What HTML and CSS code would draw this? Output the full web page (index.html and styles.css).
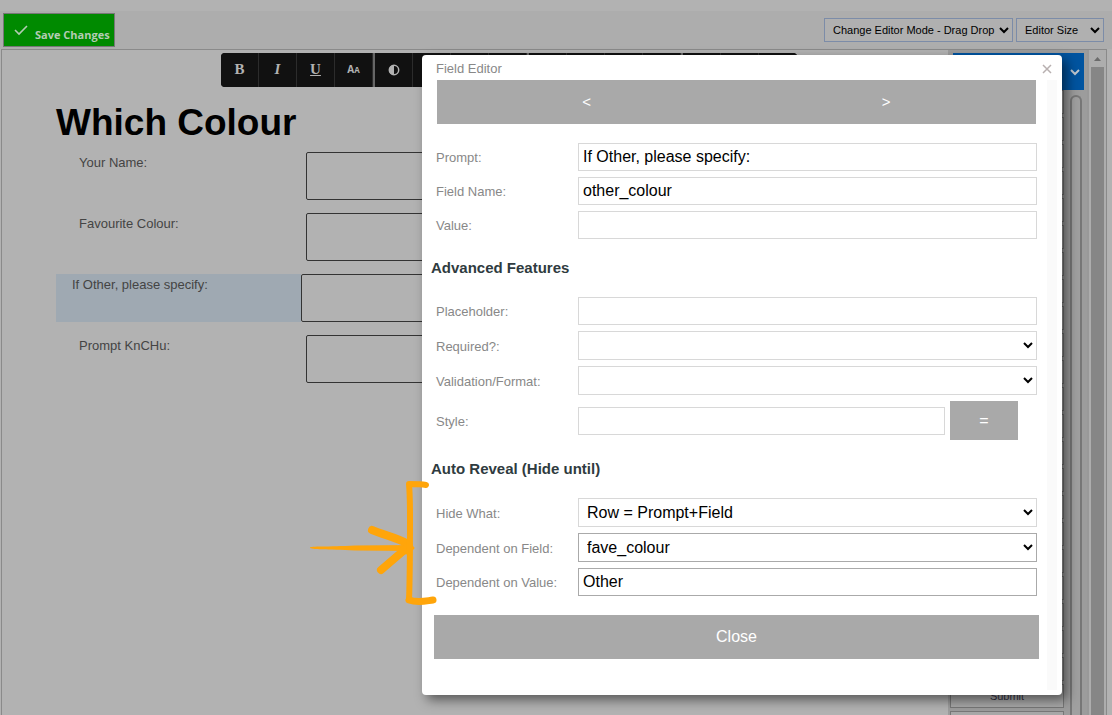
FILE: index.html
```html
<!DOCTYPE html>
<html lang="en">
<head>
  <meta charset="UTF-8">
  <title>Form Editor</title>
  <link rel="stylesheet" href="styles.css">
</head>
<body>
  <div class="top-bar">
    <button class="save-button">
      <svg width="14" height="12" viewBox="0 0 14 12"><path d="M1 6l4 4 8-8" fill="none" stroke="#b4ccb4" stroke-width="1.6"/></svg>
      <span>Save Changes</span>
    </button>
    <div class="top-options">
      <select class="mode-select" aria-label="Editor mode"><option>Change Editor Mode - Drag Drop</option></select>
      <select class="size-select" aria-label="Editor size"><option>Editor Size</option></select>
    </div>
  </div>

  <div class="editor">
    <div class="canvas">
      <div class="toolbar">
        <button class="tool">B</button>
        <button class="tool italic">I</button>
        <button class="tool underline">U</button>
        <button class="tool letters">A<small>A</small></button>
        <button class="tool group" aria-label="Contrast">
          <svg width="12" height="12" viewBox="0 0 12 12"><circle cx="6" cy="6" r="4.7" fill="none" stroke="#b2b2b2" stroke-width="1.5"/><path d="M6 1a5 5 0 0 0 0 10z" fill="#b2b2b2"/></svg>
        </button>
        <button class="tool"></button>
        <button class="tool"></button>
        <button class="tool"></button>
        <button class="tool group"></button>
        <button class="tool"></button>
        <button class="tool"></button>
        <button class="tool"></button>
        <button class="tool group"></button>
        <button class="tool"></button>
        <button class="tool"></button>
      </div>
      <h1>Which Colour</h1>
      <div class="form-row">
        <label for="your-name">Your Name:</label>
        <input type="text" id="your-name">
      </div>
      <div class="form-row">
        <label for="favourite">Favourite Colour:</label>
        <input type="text" id="favourite">
      </div>
      <div class="form-row selected">
        <label for="if-other">If Other, please specify:</label>
        <input type="text" id="if-other">
      </div>
      <div class="form-row">
        <label for="knchu">Prompt KnCHu:</label>
        <input type="text" id="knchu">
      </div>
    </div>

    <div class="palette">
      <button class="palette-head" aria-label="Choose palette">
        <svg width="10" height="7" viewBox="0 0 10 7"><path d="M1 1l4 4 4-4" fill="none" stroke="#c0c8d0" stroke-width="2"/></svg>
      </button>
      <div class="palette-body">
        <div class="palette-list">
          <button></button><button></button><button></button><button></button>
          <button></button><button></button><button></button><button></button>
          <button></button><button></button><button></button><button></button>
          <button></button><button></button><button></button><button></button>
          <button></button><button></button><button></button><button></button>
          <button></button><button></button>
          <button>Submit</button>
          <button></button>
        </div>
        <div class="palette-scroll"></div>
      </div>
    </div>
    <div class="scrollbar">
      <svg width="7" height="4" viewBox="0 0 7 4"><path d="M0 4l3.5-4L7 4z" fill="#6b6b6b"/></svg>
      <div class="thumb"></div>
    </div>
  </div>

  <div class="modal">
    <div class="modal-head">
      <span>Field Editor</span>
      <button class="modal-close" aria-label="Close editor">
        <svg width="10" height="10" viewBox="0 0 10 10"><path d="M1 1l8 8M9 1l-8 8" fill="none" stroke="#b8b0b0" stroke-width="1.5"/></svg>
      </button>
    </div>
    <div class="modal-body">
      <div class="modal-form">
        <div class="nav">
          <button>&lt;</button>
          <button>&gt;</button>
        </div>
        <div class="fields">
          <div class="field">
            <label for="prompt">Prompt:</label>
            <input type="text" id="prompt" value="If Other, please specify:">
          </div>
          <div class="field">
            <label for="field-name">Field Name:</label>
            <input type="text" id="field-name" value="other_colour">
          </div>
          <div class="field">
            <label for="value">Value:</label>
            <input type="text" id="value">
          </div>
        </div>
        <h2>Advanced Features</h2>
        <div class="fields">
          <div class="field">
            <label for="placeholder">Placeholder:</label>
            <input type="text" id="placeholder">
          </div>
          <div class="field">
            <label for="required">Required?:</label>
            <select id="required"><option></option></select>
          </div>
          <div class="field">
            <label for="validation">Validation/Format:</label>
            <select id="validation"><option></option></select>
          </div>
          <div class="field">
            <label for="style">Style:</label>
            <div class="style-box">
              <input type="text" id="style">
              <button>=</button>
            </div>
          </div>
        </div>
        <h2>Auto Reveal (Hide until)</h2>
        <div class="fields">
          <div class="field">
            <label for="hide-what">Hide What:</label>
            <select id="hide-what"><option>Row = Prompt+Field</option></select>
          </div>
          <div class="field">
            <label for="dep-field">Dependent on Field:</label>
            <select id="dep-field" class="changed"><option>fave_colour</option></select>
          </div>
          <div class="field">
            <label for="dep-value">Dependent on Value:</label>
            <input type="text" id="dep-value" class="changed" value="Other">
          </div>
        </div>
        <button class="close-button">Close</button>
      </div>
      <div class="modal-track"></div>
    </div>

    <svg class="pointer" width="130" height="126" viewBox="0 0 130 126" fill="none" stroke="#ffa50a" stroke-linecap="round" stroke-linejoin="round">
      <path d="M2 67.500C2 66 20 67 47 65.500L104 65v6L47 70.500C20 69 2 70 2 67.500z" fill="#ffa50a" stroke="none"/>
      <path d="M64 50c12 5 26 8 36 14" stroke-width="8"/>
      <path d="M73 90l28-24" stroke-width="8"/>
      <path d="M98 64l7 4-7 5z" stroke-width="3" fill="#ffa50a"/>
      <path d="M118 5c-5-1-12-1-17-1c1 11 1 22 1 34c0 24 0 58-1 82" stroke-width="6"/>
      <path d="M101 120c9 3 16 1 24 0" stroke-width="7"/>
    </svg>
  </div>
</body>
</html>
```
FILE: styles.css
```css
* {
  box-sizing: border-box;
}
body {
  margin: 0;
  height: 100vh;
  overflow: hidden;
  display: flex;
  flex-direction: column;
  background: #b2b2b2;
  font-family: "Liberation Sans", Arial, sans-serif;
  font-size: 13px;
}
button, input, select {
  font-family: inherit;
  margin: 0;
}
button {
  padding: 0;
  border: none;
}

/* top bar */
.top-bar {
  display: flex;
  justify-content: space-between;
  align-items: flex-start;
  margin-top: 11px;
  height: 38px;
  padding: 2px 8px 0 3px;
  background: #adadad;
}
.save-button {
  display: flex;
  align-items: center;
  gap: 7px;
  height: 34px;
  padding: 0 4px 0 10px;
  border: 1px solid #777;
  background: #008a00;
  color: #b4ccb4;
  font: bold 11px "Open Sans", sans-serif;
}
.save-button span {
  padding-top: 9px;
}
.top-options {
  display: flex;
  gap: 3px;
  padding-top: 5px;
}
.top-options select {
  height: 24px;
  padding: 0 0 0 4px;
  border: 1px solid #7c8ca8;
  border-radius: 0;
  background-color: #b0b0b0;
  color: #000;
  font-size: 11px;
}
.mode-select {
  width: 189px;
}
.size-select {
  width: 88px;
}

/* editor */
.editor {
  flex: 1;
  min-height: 0;
  display: flex;
  margin: 0 5px 0 1px;
  border: 1px solid #8a8a8a;
  border-bottom: none;
}
.canvas {
  flex: 1;
  padding: 3px 20px 0 54px;
}
.toolbar {
  display: flex;
  width: 576px;
  height: 34px;
  margin-left: 165px;
  border-radius: 4px;
  overflow: hidden;
  background: #111;
}
.tool {
  flex: 1;
  padding-bottom: 2px;
  background: #111;
  color: #b2b2b2;
  border-right: 1px solid #2c2c2c;
  font: bold 15px "Liberation Serif", serif;
}
.tool svg {
  vertical-align: middle;
}
.italic {
  font-style: italic;
}
.underline {
  text-decoration: underline;
}
.letters {
  font: bold 10px "Open Sans", sans-serif;
}
.letters small {
  font-size: 8px;
}
.group {
  border-left: 2px solid #666;
}
h1 {
  margin: 15px 0 8px;
  font-size: 37px;
  line-height: 42px;
}
.form-row {
  display: flex;
  height: 48px;
  margin-bottom: 13px;
}
.form-row label {
  width: 250px;
  padding-left: 23px;
  line-height: 21px;
  color: #444;
}
.form-row input {
  flex: 1;
  border: 1px solid #333;
  border-radius: 2px;
  background: #b2b2b2;
}
.selected label {
  width: 245px;
  padding-left: 16px;
  background: #9fa9b2;
}

/* palette */
.palette {
  width: 139px;
  display: flex;
  flex-direction: column;
  padding: 3px 2px 0;
  background: #9c9c9c;
}
.palette-head {
  height: 37px;
  margin: 0 1px 0 3px;
  padding-right: 4px;
  text-align: right;
  background: #0054a0;
}
.palette-body {
  flex: 1;
  min-height: 0;
  display: flex;
  gap: 6px;
  overflow: hidden;
}
.palette-list {
  width: 114px;
}
.palette-list button {
  display: block;
  width: 100%;
  height: 24px;
  margin-bottom: 3px;
  border: 1px solid #777;
  background: #a8a8a8;
  color: #334;
  font-size: 11px;
}
.palette-scroll {
  width: 12px;
  margin-top: 5px;
  border: 2px solid #777;
  border-bottom: none;
  border-radius: 6px 6px 0 0;
  background: #a0a0a0;
}
.scrollbar {
  width: 19px;
  display: flex;
  flex-direction: column;
  align-items: center;
  gap: 6px;
  padding-top: 7px;
  border-left: 2px solid #999;
  background: #adadad;
}
.thumb {
  flex: 1;
  width: 13px;
  background: #868686;
}

/* field editor */
.modal {
  position: absolute;
  top: 55px;
  right: 50px;
  width: 640px;
  padding: 0 5px 5px 14px;
  border-radius: 4px;
  background: #fff;
  box-shadow: 5px 5px 12px rgba(0, 0, 0, 0.5);
}
.modal-head {
  display: flex;
  justify-content: space-between;
  align-items: center;
  height: 25px;
  padding: 2px 5px 0 0;
  color: #888;
}
.modal-close {
  display: flex;
  background: none;
}
.modal-body {
  display: flex;
  gap: 10px;
}
.modal-form {
  flex: 1;
  padding-bottom: 31px;
}
.modal-track {
  width: 10px;
  background: #fafafa;
}
.nav {
  display: flex;
  margin: 0 1px 19px;
}
.nav button {
  flex: 1;
  height: 44px;
  padding-bottom: 2px;
  background: #a9a9a9;
  color: #fff;
  font-size: 15px;
}
.fields {
  display: flex;
  flex-direction: column;
  gap: 6px;
}
.field {
  display: grid;
  grid-template-columns: 142px 1fr;
  align-items: center;
}
.field label {
  padding-top: 1px;
  color: #888;
}
.field input,
.field select {
  width: 100%;
  min-width: 0;
  height: 28px;
  border: 1px solid #d8d8d8;
  border-radius: 0;
  padding: 0 4px;
  background-color: #fff;
  color: #000;
  font-size: 16px;
}
.field select {
  height: 29px;
}
.field .changed {
  border-color: #aaa;
}
.style-box {
  display: flex;
  align-items: center;
  gap: 5px;
  padding-right: 19px;
}
.style-box button {
  flex: none;
  width: 68px;
  height: 39px;
  background: #a9a9a9;
  color: #fff;
  font-size: 16px;
}
h2 {
  margin: 0 0 0 -5px;
  font-size: 15px;
  line-height: 58px;
  color: #2f3b40;
}
.close-button {
  display: block;
  width: calc(100% + 4px);
  height: 44px;
  margin: 19px 0 0 -2px;
  background: #a9a9a9;
  color: #fff;
  font-size: 16px;
}
/* bracket and arrow over the auto reveal fields */
.pointer {
  position: absolute;
  left: -114px;
  top: 425px;
}
```
